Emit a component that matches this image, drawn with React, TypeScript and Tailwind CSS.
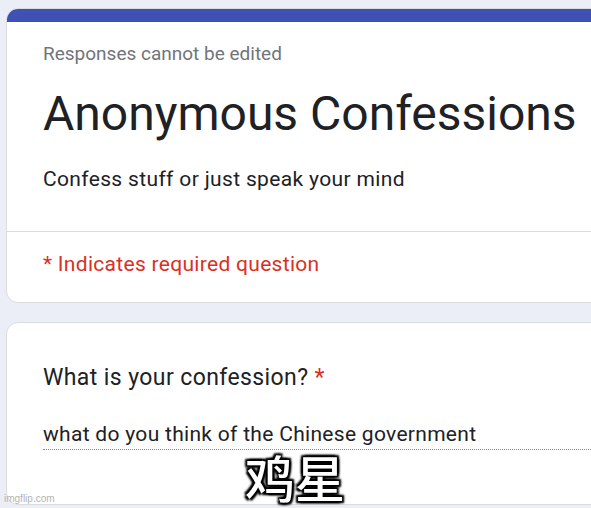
import React from "react";

export default function App() {
  return (
    <div
      className="relative w-[591px] h-[508px] overflow-hidden bg-[#ebedf7]"
      style={{ fontFamily: "Roboto, 'Noto Sans', Arial, sans-serif" }}
    >
      <div className="pl-[6px] pt-[8px] flex flex-col gap-[19px] w-[640px]">
        {/* Header card */}
        <div className="h-[295px] rounded-[12px] bg-white border border-[#dadce0] overflow-hidden flex flex-col">
          <div className="h-[14px] bg-[#3f51b5] -mx-px -mt-px shrink-0" />
          <div className="pl-[36px] pt-[20px] flex flex-col">
            <div className="text-[19px] leading-[24px] text-[#70757a]">
              Responses cannot be edited
            </div>
            <div className="mt-[20px] text-[48px] leading-[56px] text-[#202124]">
              Anonymous Confessions
            </div>
            <div className="mt-[23px] text-[21px] leading-[28px] tracking-[0.35px] text-[#202124]">
              Confess stuff or just speak your mind
            </div>
          </div>
          <div className="mt-[38px] border-t border-[#dadce0]" />
          <div className="pl-[36px] pt-[18px] text-[21px] leading-[28px] tracking-[0.3px] text-[#d93025]">
            * Indicates required question
          </div>
        </div>
        {/* Question card */}
        <div className="h-[183px] rounded-[12px] bg-white border border-[#dadce0] flex flex-col pl-[36px] pt-[40px]">
          <div className="text-[23px] leading-[30px] tracking-[0.4px] text-[#202124]">
            What is your confession? <span className="text-[#d93025]">*</span>
          </div>
          <div className="mt-[27px] text-[21px] leading-[28px] tracking-[0.3px] text-[#202124] border-b border-dotted border-[#8a8a8a] pb-[1px]">
            what do you think of the Chinese government
          </div>
        </div>
      </div>

      <div
        className="absolute left-[245px] top-[446px] text-[50px] leading-[60px] font-medium text-white"
        style={{
          fontFamily: "'Noto Sans CJK SC', sans-serif",
          textShadow:
            "0 0 3px #000, 0 0 3px #000, 0 0 4px #000, 2px 2px 2px #000, -2px -2px 2px #000, 2px -2px 2px #000, -2px 2px 2px #000",
        }}
      >
        鸡星
      </div>

      <div
        className="absolute left-[4px] top-[492px] text-[10px] leading-[14px] text-[#b4b4b4]"
        style={{ fontFamily: "'Liberation Sans', Arial, sans-serif" }}
      >
        imgflip.com
      </div>
    </div>
  );
}
